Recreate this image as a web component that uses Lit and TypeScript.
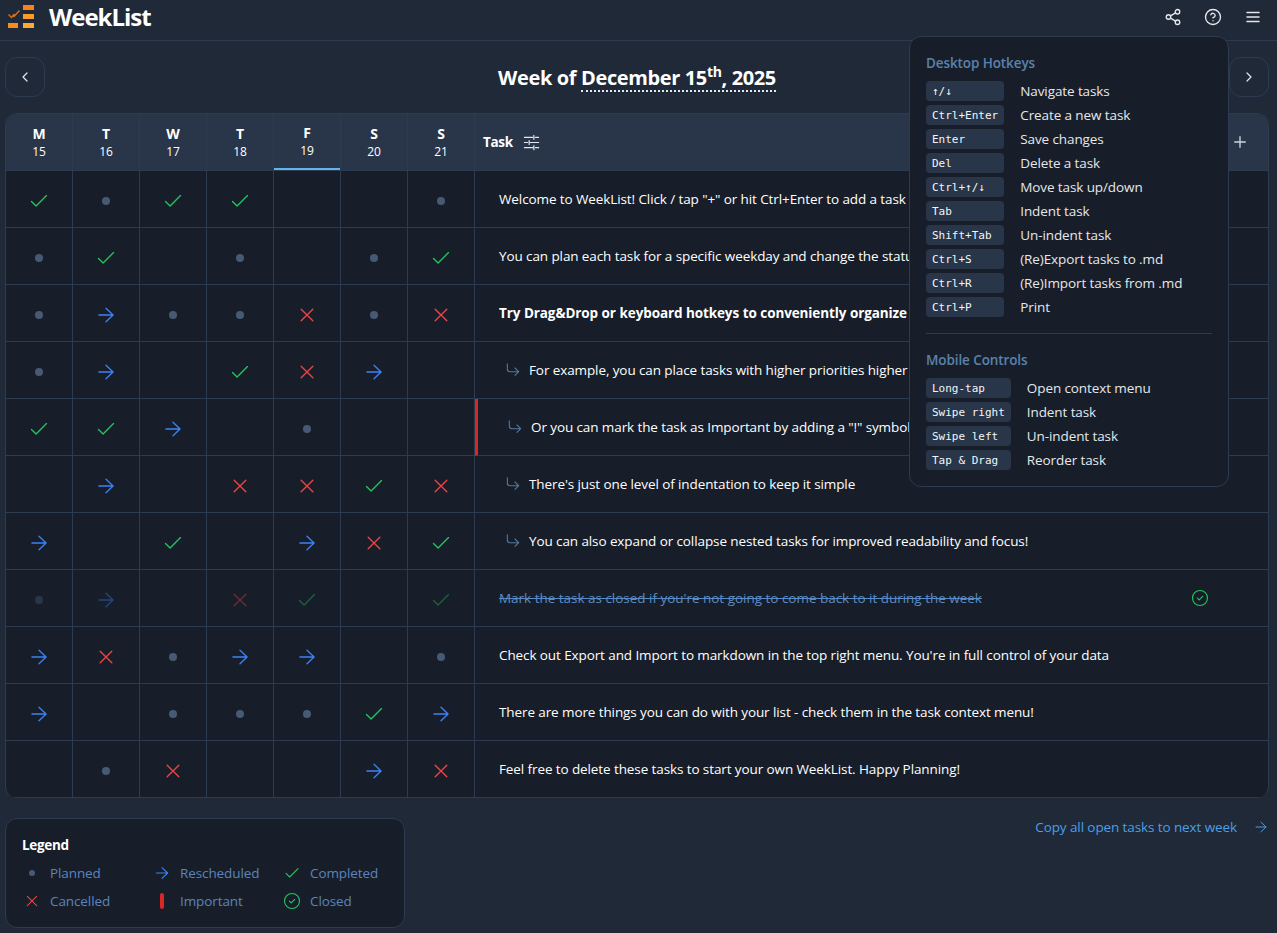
import { LitElement, html, css, svg } from "lit";
import { customElement } from "lit/decorators.js";

type S = "c" | "p" | "a" | "x" | "_";
interface Row { days: string; text: string; indent?: boolean; bold?: boolean; important?: boolean; closed?: boolean; }

const rows: Row[] = [
  { days: "cpcc__p", text: 'Welcome to WeekList! Click / tap "+" or hit Ctrl+Enter to add a task' },
  { days: "pc_p_pc", text: "You can plan each task for a specific weekday and change the status by clicking on a cell" },
  { days: "pappxpx", text: "Try Drag&Drop or keyboard hotkeys to conveniently organize your tasks", bold: true },
  { days: "pa_cxa_", text: "For example, you can place tasks with higher priorities higher in the list", indent: true },
  { days: "cca_p__", text: 'Or you can mark the task as Important by adding a "!" symbol at the beginning', indent: true, important: true },
  { days: "_a_xxcx", text: "There's just one level of indentation to keep it simple", indent: true },
  { days: "a_c_axc", text: "You can also expand or collapse nested tasks for improved readability and focus!", indent: true },
  { days: "pa_xc_c", text: "Mark the task as closed if you're not going to come back to it during the week", closed: true },
  { days: "axpaa_p", text: "Check out Export and Import to markdown in the top right menu. You're in full control of your data" },
  { days: "a_pppca", text: "There are more things you can do with your list - check them in the task context menu!" },
  { days: "_px__ax", text: "Feel free to delete these tasks to start your own WeekList. Happy Planning!" },
];

const days = [["M", "15"], ["T", "16"], ["W", "17"], ["T", "18"], ["F", "19"], ["S", "20"], ["S", "21"]];

const desktop = [
  ["↑/↓", "Navigate tasks"], ["Ctrl+Enter", "Create a new task"], ["Enter", "Save changes"], ["Del", "Delete a task"],
  ["Ctrl+↑/↓", "Move task up/down"], ["Tab", "Indent task"], ["Shift+Tab", "Un-indent task"],
  ["Ctrl+S", "(Re)Export tasks to .md"], ["Ctrl+R", "(Re)Import tasks from .md"], ["Ctrl+P", "Print"],
];
const mobile = [["Long-tap", "Open context menu"], ["Swipe right", "Indent task"], ["Swipe left", "Un-indent task"], ["Tap & Drag", "Reorder task"]];

const ic = (size: number, w: number, body: unknown, cls = "") => html`<svg class=${cls} width=${size} height=${size} viewBox="0 0 24 24" fill="none" stroke="currentColor" stroke-width=${w} stroke-linecap="round" stroke-linejoin="round">${body}</svg>`;

const ARROW = svg`<path d="M3.5 12h17M12 3.8l8.5 8.2-8.5 8.2"/>`;
const check = () => ic(20, 1.6, svg`<path d="M3 12.5l5.5 5.5L21 5.5"/>`, "green");
const arrow = () => ic(20, 1.6, ARROW, "blue");
const cross = () => ic(20, 1.6, svg`<path d="M5 5l14 14M19 5L5 19"/>`, "red");
const dot = () => html`<span class="dot"></span>`;
const closedIcon = () => ic(18, 1.5, svg`<circle cx="12" cy="12" r="10"/><path d="M8.5 12.2l2.4 2.4 4.8-4.8"/>`, "green");
const status = (s: string) => (s === "c" ? check() : s === "a" ? arrow() : s === "x" ? cross() : s === "p" ? dot() : "");

@customElement("app-root")
export class AppRoot extends LitElement {
  static styles = css`
    :host { display: block; position: relative; min-height: 100vh; background: #1f2937; color: #fff; font-family: "Open Sans", "Noto Sans", sans-serif; font-size: 13.5px; letter-spacing: -0.1px; overflow: hidden; }
    svg { display: block; flex: none; }
    .green { color: #22c55e; } .blue { color: #3b82f6; } .red { color: #ef4444; }
    .dot { display: block; width: 8px; height: 8px; border-radius: 50%; background: #475a75; }

    .topbar { height: 40px; border-bottom: 1px solid #2d3b50; display: flex; align-items: center; padding: 0 15px 0 8px; box-sizing: content-box; }
    .brand { font-size: 24px; font-weight: 700; letter-spacing: -1px; margin-left: 15px; margin-top: -8px; }
    .logo { margin-top: -6px; }
    .actions { margin-left: auto; display: flex; gap: 22px; color: #e5e7eb; margin-top: -7px; }

    .nav { display: flex; align-items: center; justify-content: space-between; padding: 16px 8px 16px 5px; }
    .navbtn { width: 40px; height: 40px; box-sizing: border-box; border: 1px solid #2d3b50; border-radius: 12px; display: flex; align-items: center; justify-content: center; color: #e5e7eb; }
    .week { font-size: 20px; line-height: 26px; font-weight: 700; letter-spacing: -0.37px; margin-top: 2px; }
    .date { display: inline-block; line-height: 24px; border-bottom: 2px dotted #e2e8f0; }
    .date sup { font-size: 14px; line-height: 0; }

    .table { margin: 0 8px 0 5px; border: 1px solid #2d3b50; border-bottom: 0; border-radius: 12px; overflow: hidden; background: #171e29; display: grid; grid-template-columns: repeat(7, 67px) 1fr; grid-auto-rows: 57px; }
    .cell { border-right: 1px solid #2d3b50; border-bottom: 1px solid #2d3b50; display: flex; align-items: center; justify-content: center; min-width: 0; box-sizing: border-box; }
    .status { padding-top: 4px; }
    .dim > * { opacity: 0.4; }
    .head { background: #293548; flex-direction: column; }
    .head b { font-size: 14px; line-height: 20px; }
    .head span { font-size: 12px; line-height: 16px; }
    .today { box-shadow: inset 0 -2px 0 #63b3ed; padding-bottom: 2px; }
    .taskhead { background: #293548; border-right: 0; justify-content: flex-start; padding: 0 19px 0 8px; }
    .taskhead b { font-size: 13.5px; letter-spacing: -0.3px; }
    .taskhead .filter { margin-left: 9px; color: #e2e8f0; }
    .taskhead .plus { margin-left: auto; color: #cbd5e1; }
    .task { border-right: 0; justify-content: flex-start; padding: 0 59px 0 24px; gap: 7px; overflow: hidden; }
    .task.indent { padding-left: 31px; }
    .task.imp { border-left: 3px solid #dc2626; padding-left: 30px; }
    .task .txt { white-space: nowrap; margin-top: -1px; flex: 1; }
    .task.bold .txt { font-weight: 700; letter-spacing: -0.12px; word-spacing: 0.3px; }
    .task.closed .txt { color: #5a8bc4; letter-spacing: -0.02px; text-decoration: line-through; }
    .sub { color: #56789f; }

    .foot { display: flex; justify-content: space-between; align-items: flex-start; padding: 20px 9px 0 5px; }
    .legend { width: 400px; height: 110px; box-sizing: border-box; border: 1px solid #2d3b50; border-radius: 12px; background: #171e29; padding: 16px; }
    .legend h4 { margin: 0 0 4px; font-size: 13.5px; line-height: 20px; font-weight: 700; letter-spacing: -0.3px; }
    .legend .dot { width: 6px; height: 6px; }
    .lgrid { display: grid; grid-template-columns: 130px 130px 1fr; grid-auto-rows: 28px; }
    .li { display: flex; align-items: center; color: #5b84bf; }
    .li .ico { width: 20px; margin-right: 8px; display: flex; justify-content: center; }
    .imp-bar { width: 4px; height: 16px; border-radius: 2px; background: #dc2626; }
    .copy { display: flex; align-items: center; color: #4a9fe8; margin-top: -1px; gap: 17px; height: 20px; }

    .pop { position: absolute; top: 36px; left: 909px; width: 320px; height: 451px; box-sizing: border-box; border: 1px solid #2d3b50; border-radius: 12px; background: #171e29; padding: 16px; }
    .pop h5 { margin: 0 0 8px; font-size: 13.5px; font-weight: 600; line-height: 20px; color: #5b82ad; }
    .keys { display: grid; grid-template-columns: auto 1fr; column-gap: 16px; row-gap: 4px; align-items: center; }
    .kbd { height: 20px; box-sizing: border-box; padding: 0 6px; background: #293548; border-radius: 4px; font-family: "DejaVu Sans Mono", monospace; font-size: 11px; letter-spacing: 0; line-height: 21px; white-space: nowrap; color: #f1f5f9; }
    .lab { color: #e5e7eb; }
    hr { border: 0; border-top: 1px solid #2d3b50; margin: 16px 0; }
  `;

  render() {
    return html`
      <div class="topbar">
        <svg class="logo" width="26" height="24" viewBox="0 0 26 24">
          <rect x="15" y="0" width="11" height="5" fill="#f9801d"/><rect x="15" y="9" width="11" height="5" fill="#fb9a27"/><rect x="15" y="18" width="11" height="5" fill="#fbab2f"/>
          <rect x="0" y="18" width="10" height="5" fill="#f98a1f"/>
          <path d="M0.5 9.5l3 3 3-3.5M4.5 10l1.5 1.5 5.5-6" fill="none" stroke="#d97017" stroke-width="1.4"/>
        </svg>
        <span class="brand">WeekList</span>
        <div class="actions">
          ${ic(18, 1.8, svg`<circle cx="18" cy="5" r="3"/><circle cx="6" cy="12" r="3"/><circle cx="18" cy="19" r="3"/><path d="M8.6 13.5l6.8 4M15.4 6.5l-6.8 4"/>`)}
          ${ic(18, 1.8, svg`<circle cx="12" cy="12" r="10"/><path d="M9.1 9a3 3 0 0 1 5.8 1c0 2-3 3-3 3M12 17h.01"/>`)}
          ${ic(18, 2, svg`<path d="M4 6h16M4 12h16M4 18h16"/>`)}
        </div>
      </div>

      <div class="nav">
        <div class="navbtn">${ic(16, 1.8, svg`<path d="M15 18l-6-6 6-6"/>`)}</div>
        <div class="week">Week of <span class="date">December 15<sup>th</sup>, 2025</span></div>
        <div class="navbtn">${ic(16, 1.8, svg`<path d="M9 18l6-6-6-6"/>`)}</div>
      </div>

      <div class="table">
        ${days.map(([d, n], i) => html`<div class="cell head ${i === 4 ? "today" : ""}"><b>${d}</b><span>${n}</span></div>`)}
        <div class="cell taskhead"><b>Task</b>
          ${ic(19, 1.5, svg`<path d="M3 5.5h10.5M17 5.5h4M3 12h4M10.5 12H21M3 18.5h10.5M17 18.5h4M15 3v5M9 9.5v5M15 16v5"/>`, "filter")}
          ${ic(18, 1.8, svg`<path d="M12 5v14M5 12h14"/>`, "plus")}
        </div>
        ${rows.map((r) => html`
          ${[...r.days].map((s) => html`<div class="cell status ${r.closed ? "dim" : ""}">${status(s as S)}</div>`)}
          <div class="cell task ${r.indent ? "indent" : ""} ${r.bold ? "bold" : ""} ${r.important ? "imp" : ""} ${r.closed ? "closed" : ""}">
            ${r.indent ? ic(16, 1.6, svg`<path d="M2 2.5v8a4 4 0 0 0 4 4h12.5M13.5 9l5.5 5.5-5.5 5.5"/>`, "sub") : ""}
            <span class="txt">${r.text}</span>
            ${r.closed ? closedIcon() : ""}
          </div>`)}
      </div>

      <div class="foot">
        <div class="legend">
          <h4>Legend</h4>
          <div class="lgrid">
            <div class="li"><span class="ico">${dot()}</span>Planned</div>
            <div class="li"><span class="ico">${ic(16, 1.6, ARROW, "blue")}</span>Rescheduled</div>
            <div class="li"><span class="ico">${ic(16, 1.6, svg`<path d="M3 12.5l5.5 5.5L21 5.5"/>`, "green")}</span>Completed</div>
            <div class="li"><span class="ico">${ic(16, 1.6, svg`<path d="M5 5l14 14M19 5L5 19"/>`, "red")}</span>Cancelled</div>
            <div class="li"><span class="ico"><span class="imp-bar"></span></span>Important</div>
            <div class="li"><span class="ico">${closedIcon()}</span>Closed</div>
          </div>
        </div>
        <div class="copy">Copy all open tasks to next week ${ic(14, 1.7, ARROW)}</div>
      </div>

      <div class="pop">
        <h5>Desktop Hotkeys</h5>
        <div class="keys">${desktop.map(([k, l]) => html`<span class="kbd">${k}</span><span class="lab">${l}</span>`)}</div>
        <hr />
        <h5>Mobile Controls</h5>
        <div class="keys">${mobile.map(([k, l]) => html`<span class="kbd">${k}</span><span class="lab">${l}</span>`)}</div>
      </div>
    `;
  }
}
